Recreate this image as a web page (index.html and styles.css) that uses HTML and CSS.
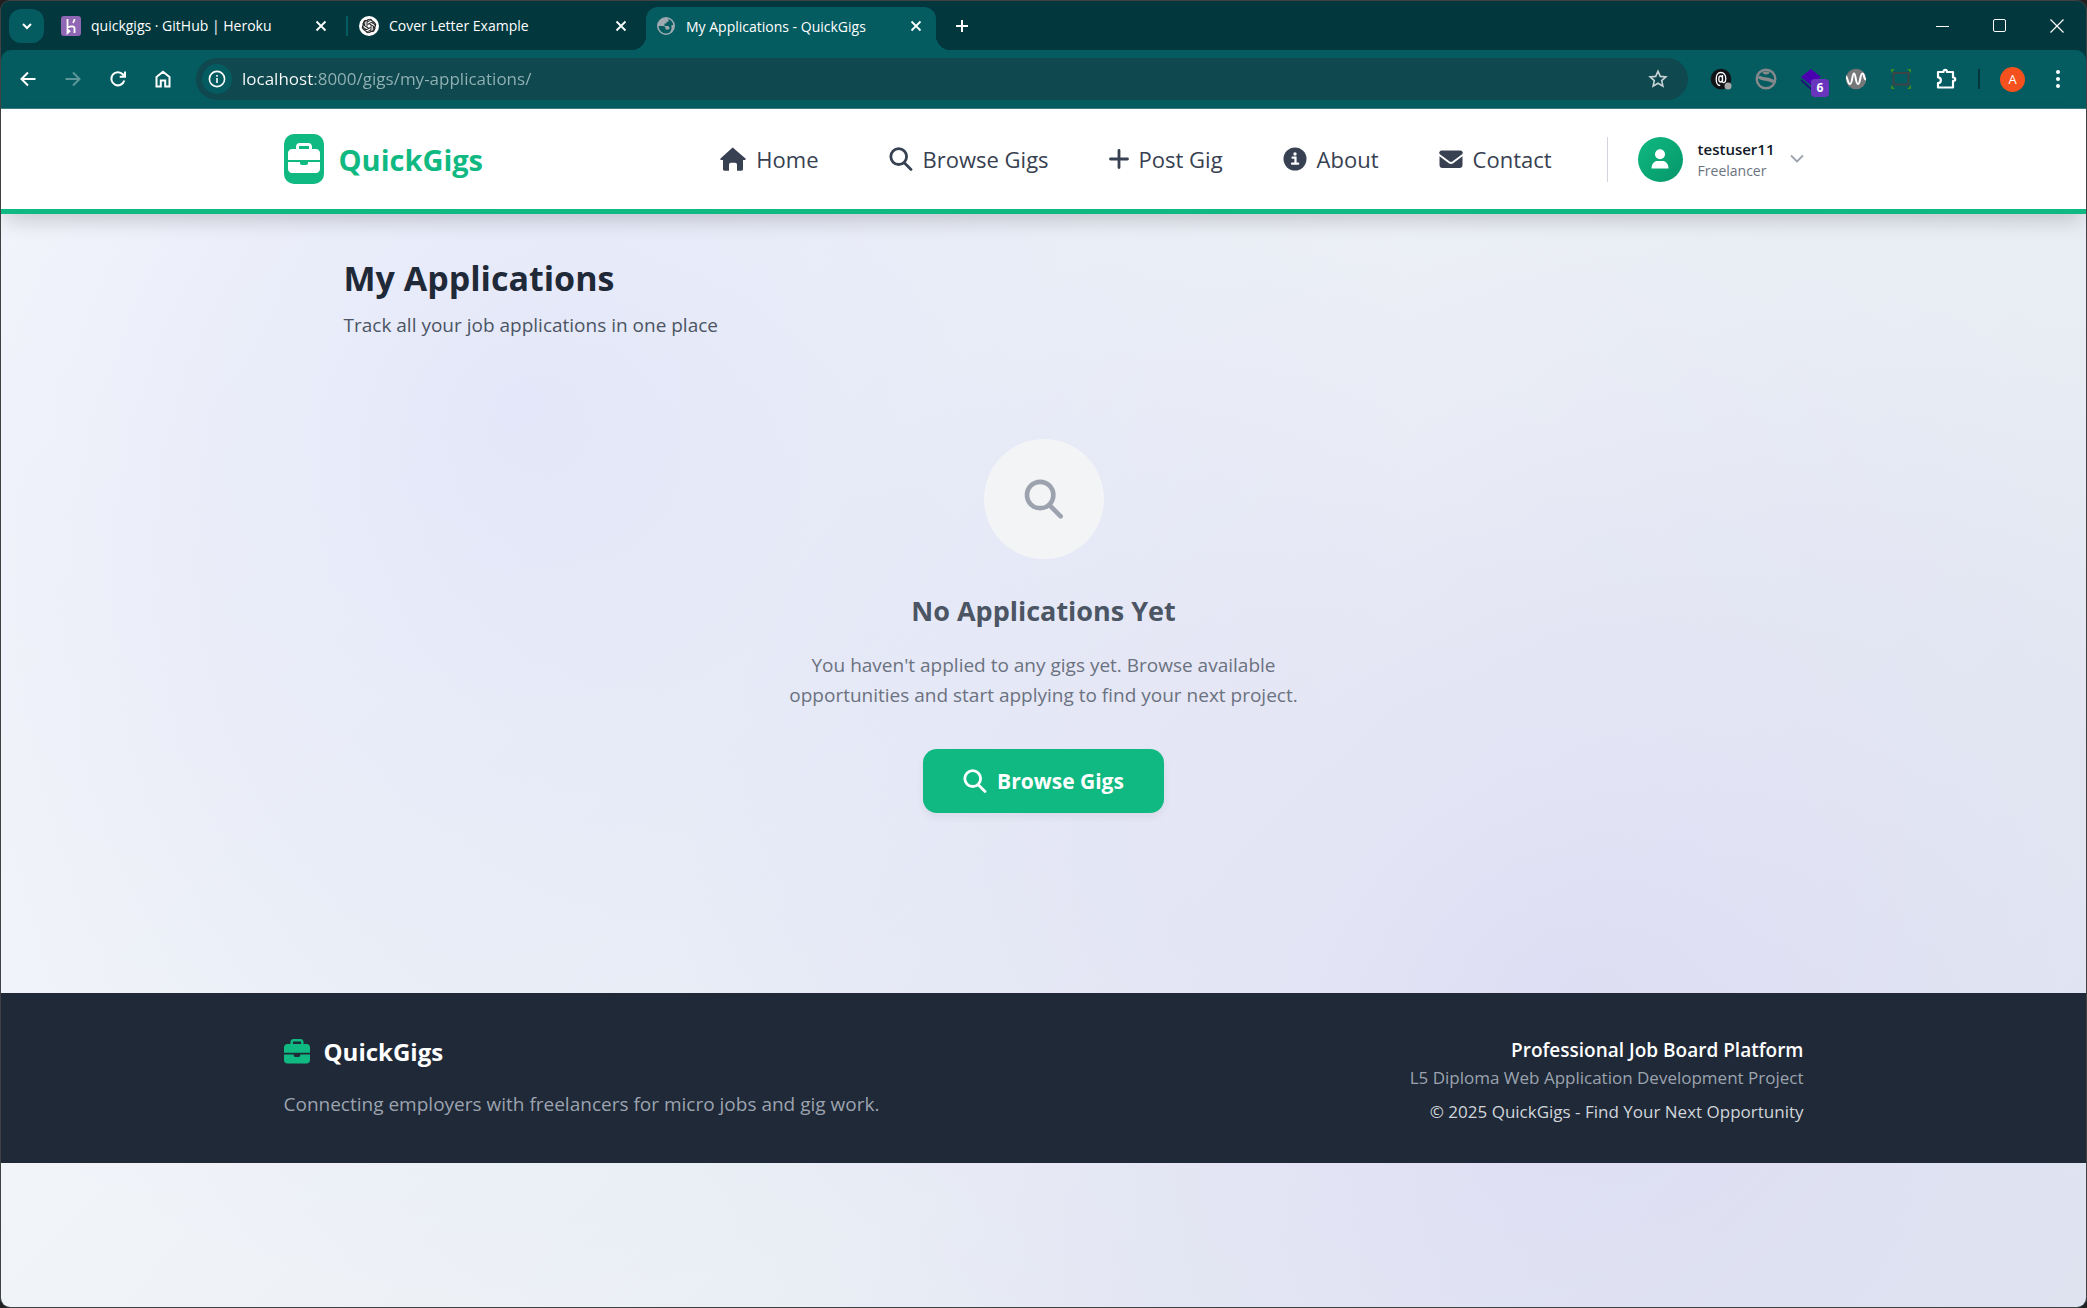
FILE: index.html
```html
<!DOCTYPE html>
<html lang="en">
<head>
<meta charset="utf-8">
<title>My Applications - QuickGigs</title>
<link rel="stylesheet" href="styles.css">
</head>
<body>
<svg class="sprite" aria-hidden="true">
  <symbol id="search" viewBox="0 0 24 24"><path d="M15 15.4L22 22.4M17.6 9.6a7.9 7.9 0 1 1-15.8 0a7.9 7.9 0 0 1 15.8 0z" fill="none" stroke="currentColor" stroke-width="2.8" stroke-linecap="round"/></symbol>
  <symbol id="case" viewBox="0 0 512 512"><path fill="currentColor" d="M176 56v40h160V56c0-4-4-8-8-8H184c-4 0-8 4-8 8zm-48 40V56c0-31 25-56 56-56h144c31 0 56 25 56 56v40h64c35 0 64 29 64 64v112H0V160c0-35 29-64 64-64zM0 304h192v16c0 18 14 32 32 32h64c18 0 32-14 32-32v-16h192v112c0 35-29 64-64 64H64c-35 0-64-29-64-64z"/></symbol>
  <symbol id="cross" viewBox="0 0 12 12"><path d="M1.5 1.500l9 9m0-9l-9 9" fill="none" stroke="currentColor" stroke-width="1.8"/></symbol>
</svg>
<div class="window">
  <header class="tabstrip">
    <button class="tab-search" aria-label="Search tabs"><svg width="12" height="12" viewBox="0 0 12 12"><path d="M2 4l4 4 4-4" fill="none" stroke="currentColor" stroke-width="2"/></svg></button>
    <div class="tab">
      <svg width="20" height="20" viewBox="0 0 20 20"><rect width="20" height="20" rx="3" fill="#9067b5"/><path d="M6.500 3v8.500c3-1.400 7-2 7 .8V17M13.500 3c0 1.600-.6 2.800-1.600 3.800M6.500 13.500l2 1.800-2 1.800z" fill="none" stroke="#fff" stroke-width="1.800"/></svg>
      <span class="tab-title">quickgigs · GitHub | Heroku</span>
      <button class="tab-close" aria-label="Close tab"><svg width="12" height="12"><use href="#cross"/></svg></button>
    </div>
    <div class="tab tab-ruled">
      <svg width="20" height="20" viewBox="0 0 20 20"><circle cx="10" cy="10" r="10" fill="#fff"/><g fill="none" stroke="#222" stroke-width="1"><g id="knot"><path id="petal" d="M8 10.500V6.200a3 3 0 0 1 5.400-1.700M8 6.200l3.800-2.100 3.700 2.200"/><use href="#petal" transform="rotate(60 10 10)"/><use href="#petal" transform="rotate(120 10 10)"/></g><use href="#knot" transform="rotate(180 10 10)"/></g></svg>
      <span class="tab-title">Cover Letter Example</span>
      <button class="tab-close" aria-label="Close tab"><svg width="12" height="12"><use href="#cross"/></svg></button>
    </div>
    <div class="tab tab-active">
      <svg width="20" height="20" viewBox="0 0 20 20"><circle cx="10" cy="10" r="8.200" fill="none" stroke="#9fa9b0" stroke-width="1.600"/><path d="M11 2C6 1.500 2 5 2 10h4.500c2 0 3 .8 3 2v1.500H12c1 0 1.500-.8 1.500-1.600 0-1.400-1-1.900-2.500-1.900H8.500V7.500h2V5.800h2V3zM14 17c3-1.500 4.500-4.500 4-8h-2.500v3.500c0 2-1.500 2.500-1.500 4.500z" fill="#9fa9b0"/></svg>
      <span class="tab-title">My Applications - QuickGigs</span>
      <button class="tab-close" aria-label="Close tab"><svg width="12" height="12"><use href="#cross"/></svg></button>
    </div>
    <button class="tab-new" aria-label="New tab"><svg width="14" height="14" viewBox="0 0 14 14"><path d="M7 1v12M1 7h12" stroke="currentColor" stroke-width="2"/></svg></button>
    <div class="window-controls">
      <button aria-label="Minimize"><svg width="14" height="14" viewBox="0 0 14 14"><path d="M0 7.500h13" stroke="currentColor"/></svg></button>
      <button aria-label="Maximize"><svg width="14" height="14" viewBox="0 0 14 14"><rect x=".5" y=".5" width="12" height="12" rx="1.500" fill="none" stroke="currentColor"/></svg></button>
      <button aria-label="Close window"><svg width="14" height="14" viewBox="0 0 14 14"><path d="M.5.5l13 13m0-13l-13 13" stroke="currentColor" stroke-width="1.200"/></svg></button>
    </div>
  </header>

  <div class="toolbar">
    <div class="toolbar-nav">
      <button aria-label="Back"><svg width="20" height="20" viewBox="0 0 20 20"><path d="M17.500 10H4M10 3.500L3.500 10l6.500 6.500" fill="none" stroke="currentColor" stroke-width="2"/></svg></button>
      <button class="dim" aria-label="Forward"><svg width="20" height="20" viewBox="0 0 20 20"><path d="M2.500 10H16M10 3.500l6.500 6.500-6.500 6.500" fill="none" stroke="currentColor" stroke-width="2"/></svg></button>
      <button aria-label="Reload"><svg width="20" height="20" viewBox="0 0 20 20"><path d="M16.300 11.500A6.600 6.600 0 1 1 15 5.500l1.500 1.800M17 2.500v5.300h-5.300" fill="none" stroke="currentColor" stroke-width="2"/></svg></button>
      <button aria-label="Home"><svg width="20" height="20" viewBox="0 0 20 20"><path d="M3.500 17.500v-9.500L10 2.800 16.500 8v9.500h-4.300v-6H7.800v6z" fill="none" stroke="currentColor" stroke-width="2"/></svg></button>
    </div>
    <div class="omnibox">
      <button class="site-info" aria-label="Site information"><svg width="18" height="18" viewBox="0 0 18 18"><circle cx="9" cy="9" r="7.600" fill="none" stroke="currentColor" stroke-width="1.600"/><path d="M9 8v5M9 5v1.800" stroke="currentColor" stroke-width="1.600"/></svg></button>
      <input class="url" type="text" aria-label="Address" value="localhost:8000/gigs/my-applications/">
      <button class="bookmark" aria-label="Bookmark this page"><svg width="20" height="20" viewBox="0 0 20 20"><path d="M10 2.200l2.300 5.200 5.600.5-4.200 3.700 1.200 5.500-4.900-2.900-4.900 2.900 1.200-5.500-4.200-3.700 5.600-.5z" fill="none" stroke="currentColor" stroke-width="1.600"/></svg></button>
    </div>
    <div class="extensions">
      <button aria-label="Extension"><svg width="22" height="22" viewBox="0 0 22 22"><circle cx="11" cy="11" r="10.300" fill="#111317"/><path d="M12.500 7v6.500c0 2 3.300 1.500 3.300-2.500 0-4-2-6.500-5-6.500s-4.600 2.500-4.600 6.500 1.500 6.500 4 6.500M12.500 11c0 4-3.700 4-3.700 0s3.700-4 3.700 0z" fill="none" stroke="#fff" stroke-width="1.300"/><circle cx="18" cy="18" r="3.500" fill="#a8a8a8"/></svg></button>
      <button aria-label="Extension"><svg width="22" height="22" viewBox="0 0 22 22"><circle cx="11" cy="11" r="9.300" fill="none" stroke="#85898b" stroke-width="2.400"/><path d="M3.500 8.500C6 12 15 10 18.500 14" fill="none" stroke="#85898b" stroke-width="3.400"/><path d="M7.500 3.500c0 2 1 3 3.500 3s3.500-1 3.500-3z" fill="#85898b"/></svg></button>
      <button class="badged" aria-label="Extension, 6 items"><svg width="22" height="22" viewBox="0 0 22 22"><path d="M1 11l10 9 10-9v3l-10 8L1 13z" fill="#23067c"/><path d="M11 1l10 8-10 8L1 9z" fill="#4a00b0"/></svg><span class="badge">6</span></button>
      <button aria-label="Extension"><svg width="22" height="22" viewBox="0 0 22 22"><circle cx="11" cy="11" r="10.300" fill="#757779"/><path d="M1 8.500c1.500 0 1.500 7.500 4 7.500s2-10.500 4-10.500 1.500 10.500 4 10.500 2-10.500 4.500-10.500c2 0 1 6 3.500 6" fill="none" stroke="#fff" stroke-width="2"/></svg></button>
      <button aria-label="Extension"><svg width="22" height="22" viewBox="0 0 22 22"><rect x="3.500" y="5" width="15" height="11.500" fill="none" stroke="#3c4446" stroke-width="2"/><path d="M1 5V1h4zM17 1h4v4zM21 17v4h-4zM5 21H1v-4z" fill="#3b8a1f"/></svg></button>
      <button aria-label="Extensions"><svg width="22" height="22" viewBox="0 0 22 22"><path d="M3 4h5.500V3.500a1.700 1.700 0 0 1 3.400 0V4H18v5.500h.5a1.700 1.700 0 0 1 0 3.400H18V19.500H3V15a2.600 2.600 0 0 0 0-5.700z" fill="none" stroke="#fff" stroke-width="2.200" stroke-linejoin="round"/></svg></button>
      <span class="toolbar-rule"></span>
      <button class="profile" aria-label="Profile">A</button>
      <button aria-label="Menu"><svg width="22" height="22" viewBox="0 0 22 22"><g fill="#fff"><circle cx="11" cy="4" r="2"/><circle cx="11" cy="11" r="2"/><circle cx="11" cy="18" r="2"/></g></svg></button>
    </div>
  </div>

  <div class="page">
    <header class="site-header">
      <div class="container site-bar">
        <a class="brand" href="#"><span class="brand-mark"><svg width="32" height="32"><use href="#case"/></svg></span>QuickGigs</a>
        <nav class="site-nav">
          <a class="nav-home" href="#"><svg width="26" height="24" viewBox="0 0 26 24"><path d="M13 .8L25.500 11.500c.6.8.2 1.500-.7 1.500H23v9c0 1-.6 1.700-1.600 1.700H17V18c0-1.400-.8-2.200-2-2.200h-4c-1.200 0-2 .8-2 2.200v5.700H4.600C3.600 23.700 3 23 3 22v-9H1.200C.3 13-.1 12.300.5 11.500L11.800 1.300c.8-.6 1.600-.6 2.400 0z" fill="currentColor"/></svg>Home</a>
          <a href="#"><svg width="24" height="24"><use href="#search"/></svg>Browse Gigs</a>
          <a href="#"><svg width="20" height="24" viewBox="0 0 20 24"><path d="M10 3.500v17M1.500 12h17" stroke="currentColor" stroke-width="2.800" stroke-linecap="round"/></svg>Post Gig</a>
          <a href="#"><svg width="24" height="24" viewBox="0 0 24 24"><circle cx="12" cy="12" r="11.500" fill="currentColor"/><circle cx="12" cy="7" r="1.700" fill="#fff"/><path d="M9.500 10.700h3v5.800M9 16.700h6.200" fill="none" stroke="#fff" stroke-width="2.200" stroke-linecap="round"/></svg>About</a>
          <a href="#"><svg width="24" height="24" viewBox="0 0 24 24"><path d="M2.500 3.500h19A2.200 2.200 0 0 1 22.800 7.500L13.300 14.500c-.8.600-1.800.600-2.600 0L1.200 7.500A2.200 2.200 0 0 1 2.500 3.500zM.5 9.300l9.300 7c1.300 1 3.100 1 4.400 0l9.300-7V18a3 3 0 0 1-3 3h-17a3 3 0 0 1-3-3z" fill="currentColor"/></svg>Contact</a>
        </nav>
        <button class="account">
          <span class="avatar"><svg width="18" height="20" viewBox="0 0 18 20"><circle cx="9" cy="5.300" r="5" fill="#fff"/><path d="M.5 19.500C.5 14.500 3.500 12 6.500 12h5c3 0 6 2.500 6 7.500z" fill="#fff"/></svg></span>
          <span class="account-text"><span class="account-name">testuser11</span><span class="account-role">Freelancer</span></span>
          <svg class="chevron" width="14" height="10" viewBox="0 0 14 10"><path d="M1 1.500l6 6 6-6" fill="none" stroke="currentColor" stroke-width="1.800"/></svg>
        </button>
      </div>
    </header>

    <main class="content">
      <h1>My Applications</h1>
      <p class="lead">Track all your job applications in one place</p>
      <section class="empty">
        <div class="empty-icon"><svg width="40" height="40"><use href="#search"/></svg></div>
        <h2>No Applications Yet</h2>
        <p class="empty-text">You haven't applied to any gigs yet. Browse available opportunities and start applying to find your next project.</p>
        <a class="cta" href="#"><svg width="24" height="24"><use href="#search"/></svg>Browse Gigs</a>
      </section>
    </main>

    <footer class="site-footer">
      <div class="container footer-row">
        <div>
          <div class="footer-brand"><svg width="26" height="26"><use href="#case"/></svg>QuickGigs</div>
          <p class="footer-tag">Connecting employers with freelancers for micro jobs and gig work.</p>
        </div>
        <div class="footer-info">
          <strong>Professional Job Board Platform</strong>
          <span class="muted">L5 Diploma Web Application Development Project</span>
          <span class="copyright">© 2025 QuickGigs - Find Your Next Opportunity</span>
        </div>
      </div>
    </footer>
  </div>
</div>
</body>
</html>
```

FILE: styles.css
```css
* { box-sizing: border-box; }

body {
  margin: 0;
  background: #202020;
  font-family: "Open Sans", "Noto Sans", sans-serif;
}

button {
  display: flex;
  align-items: center;
  justify-content: center;
  padding: 0;
  border: 0;
  background: none;
  color: inherit;
  font: inherit;
}

a { color: inherit; text-decoration: none; }
h1, h2, p { margin: 0; }
svg { display: block; flex: none; }
.sprite { position: absolute; width: 0; height: 0; }

.window {
  display: flex;
  flex-direction: column;
  min-height: 100vh;
  border: 1px solid #3f4143;
  border-radius: 10px;
  overflow: hidden;
  background: #02383d;
}

/* Tab strip */
.tabstrip {
  display: flex;
  align-items: center;
  height: 49px;
  padding: 0 1px 0 8px;
  color: #fff;
  font-size: 14px;
}
.tab-search {
  width: 35px;
  height: 34px;
  margin-right: 4px;
  border-radius: 12px;
  background: #045b60;
}
.tab {
  display: flex;
  align-items: center;
  gap: 10px;
  width: 298px;
  height: 43px;
  padding: 0 15px 0 13px;
}
.tab-ruled {
  width: 300px;
  background: linear-gradient(#045b60, #045b60) 0 50% / 2px 20px no-repeat;
}
.tab-title { flex: 1; white-space: nowrap; }
.tab-close { width: 20px; height: 20px; }
.tab-active {
  position: relative;
  align-self: flex-end;
  width: 290px;
  padding: 0 10px 5px;
  border-radius: 12px 12px 0 0;
  background: #045b60;
}
.tab-active::before,
.tab-active::after {
  content: "";
  position: absolute;
  bottom: 0;
  width: 14px;
  height: 14px;
}
.tab-active::before {
  right: 100%;
  background: radial-gradient(circle at 0 0, transparent 14px, #045b60 14px);
}
.tab-active::after {
  left: 100%;
  background: radial-gradient(circle at 100% 0, transparent 14px, #045b60 14px);
}
.tab-new { width: 34px; height: 34px; margin-left: 9px; }
.window-controls { display: flex; margin-left: auto; }
.window-controls button { width: 57px; height: 48px; }

/* Toolbar */
.toolbar {
  display: flex;
  align-items: center;
  height: 59px;
  border-bottom: 1px solid #3c7c80;
  border-radius: 10px 10px 0 0;
  background: #045b60;
  color: #fff;
}
.toolbar-nav { display: flex; gap: 11px; padding: 0 16px 0 10px; }
.toolbar-nav button { width: 34px; height: 34px; }
.toolbar-nav .dim { color: #5e979a; }
.omnibox {
  display: flex;
  flex: 1;
  align-items: center;
  gap: 10px;
  height: 42px;
  padding: 0 20px 0 6px;
  border-radius: 21px;
  background: #0f484e;
}
.site-info { width: 30px; height: 30px; border-radius: 50%; background: #045b60; }
.url {
  flex: 1;
  min-width: 0;
  padding: 0;
  border: 0;
  outline: 0;
  background: linear-gradient(90deg, #fff 71px, #93b3b6 71px);
  background-clip: text;
  -webkit-background-clip: text;
  color: transparent;
  font: 17px/24px "Open Sans", "Noto Sans", sans-serif;
}
.bookmark { color: #c7d3d5; }
.extensions { display: flex; align-items: center; gap: 11px; padding: 0 11px 0 16px; }
.extensions button { width: 34px; height: 34px; }
.badged { position: relative; }
.badge {
  position: absolute;
  right: -1px;
  bottom: -1px;
  width: 18px;
  height: 18px;
  border-radius: 4px;
  background: #6a35bd;
  font-size: 12px;
  font-weight: 700;
  line-height: 18px;
}
.toolbar-rule { width: 2px; height: 20px; margin: 0 4px; background: #02383d; }
.extensions .profile {
  width: 25px;
  height: 25px;
  margin: 0 5px;
  border-radius: 50%;
  background: #f4511e;
  font-size: 13px;
}

/* Page */
.page {
  flex: 1;
  background:
    radial-gradient(circle at 25% 25%, rgba(99, 102, 241, .1), transparent 50%),
    radial-gradient(circle at 75% 75%, rgba(139, 92, 246, .1), transparent 50%),
    linear-gradient(135deg, #f8fafc, #e2e8f0);
}
.container { width: 100%; max-width: 1600px; margin: 0 auto; padding: 0 40px; }
.site-header {
  position: relative;
  border-bottom: 5px solid #10b981;
  background: #fff;
  box-shadow: 0 10px 20px -4px rgba(0, 0, 0, .18);
}
.site-bar { display: flex; align-items: center; height: 100px; }
.brand {
  display: flex;
  align-items: center;
  gap: 15px;
  color: #10b981;
  font-size: 29px;
  font-weight: 700;
}
.brand-mark {
  display: flex;
  justify-content: center;
  width: 40px;
  height: 50px;
  padding-top: 9px;
  border-radius: 10px;
  background: #10b981;
  color: #fff;
}
.site-nav {
  display: flex;
  gap: 60px;
  margin-left: auto;
  color: #374151;
  font-size: 22px;
  font-weight: 500;
}
.site-nav a { display: flex; align-items: center; gap: 10px; }
.site-nav .nav-home { padding-right: 10px; }
.account {
  display: flex;
  gap: 15px;
  height: 45px;
  margin-left: 55px;
  padding-left: 30px;
  border-left: 1px solid #d1d5db;
  text-align: left;
}
.avatar {
  display: flex;
  align-items: center;
  justify-content: center;
  width: 45px;
  height: 45px;
  border-radius: 50%;
  background: linear-gradient(135deg, #10b981, #059669);
}
.account-text { display: flex; flex-direction: column; }
.account-name { color: #111827; font-size: 15px; font-weight: 600; line-height: 24px; }
.account-role { color: #6b7280; font-size: 14px; line-height: 20px; }
.chevron { color: #9ca3af; }

.content { max-width: 1480px; margin: 0 auto; padding: 40px 40px 180px; }
h1 { color: #1f2937; font-size: 34px; font-weight: 700; line-height: 48px; }
.lead { margin-top: 8px; color: #4b5563; font-size: 19px; line-height: 30px; }
.empty {
  display: flex;
  flex-direction: column;
  align-items: center;
  padding-top: 99px;
  text-align: center;
}
.empty-icon {
  display: flex;
  align-items: center;
  justify-content: center;
  width: 120px;
  height: 120px;
  border-radius: 50%;
  background: #f3f4f6;
  color: #9ca3af;
}
h2 { margin-top: 34px; color: #4b5563; font-size: 27px; font-weight: 700; line-height: 36px; }
.empty-text {
  max-width: 520px;
  margin-top: 21px;
  color: #6b7280;
  font-size: 19px;
  line-height: 30px;
}
.cta {
  display: flex;
  align-items: center;
  gap: 10px;
  height: 64px;
  margin-top: 39px;
  padding: 0 40px;
  border-radius: 14px;
  background: #10b981;
  box-shadow: 0 4px 8px rgba(0, 0, 0, .06);
  color: #fff;
  font-size: 21px;
  font-weight: 700;
}

.site-footer { padding: 40px 0 37px; background: #1f2937; }
.footer-row { display: flex; align-items: flex-start; justify-content: space-between; }
.footer-brand {
  display: flex;
  align-items: center;
  gap: 14px;
  color: #fff;
  font-size: 24px;
  font-weight: 700;
  line-height: 38px;
}
.footer-brand svg { color: #10b981; }
.footer-tag { margin-top: 18px; color: #9ca3af; font-size: 19px; line-height: 30px; }
.footer-info {
  display: flex;
  flex-direction: column;
  align-items: flex-end;
  padding-top: 3px;
  font-size: 17px;
  line-height: 28px;
}
.footer-info strong { color: #fff; font-size: 19px; font-weight: 600; }
.muted { color: #9ca3af; }
.copyright { margin-top: 6px; color: #d1d5db; }
```
